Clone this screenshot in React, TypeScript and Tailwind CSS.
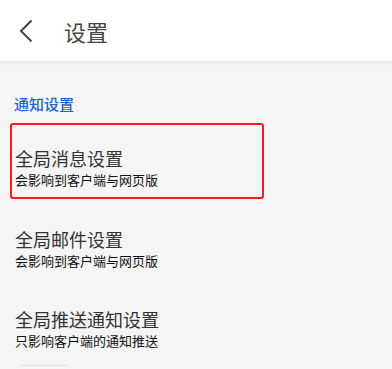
import React from 'react';

const items = [
  { title: '全局消息设置', desc: '会影响到客户端与网页版', highlight: true },
  { title: '全局邮件设置', desc: '会影响到客户端与网页版' },
  { title: '全局推送通知设置', desc: '只影响客户端的通知推送' },
];

export default function App() {
  return (
    <div
      className="w-[392px] h-[369px] overflow-hidden bg-[#f5f5f5]"
      style={{ fontFamily: '"Noto Sans CJK SC", "Noto Sans", sans-serif' }}
    >
      {/* Header */}
      <div className="h-[62px] bg-white flex items-center shadow-[0_1px_3px_rgba(0,0,0,0.08)] border-b border-[#ececec]">
        <svg width="14" height="24" viewBox="0 0 14 24" className="ml-[19px]" fill="none">
          <path d="M12.5 1.5 L2 12 L12.5 22.5" stroke="#444" strokeWidth="2" />
        </svg>
        <span className="ml-[31px] text-[22px] text-[#444] leading-none">设置</span>
      </div>

      <div className="px-[10px]">
        <div className="pl-[4px] pt-[34px] text-[15px] leading-none font-medium text-[#1565d8]">通知设置</div>

        <div className="mt-[12px] flex flex-col">
          {items.map((item, idx) => (
            <div
              key={idx}
              className={
                item.highlight
                  ? 'w-[254px] h-[76px] border-2 border-[#ff1a1a] rounded-[3px] pl-[3px] pt-[24px]'
                  : 'w-[254px] h-[80px] border-2 border-transparent pl-[3px] pt-[29px]'
              }
            >
              <div className="text-[18px] leading-none text-[#333]">{item.title}</div>
              <div className="mt-[6px] text-[13px] leading-none text-[#111]">{item.desc}</div>
            </div>
          ))}
        </div>
        <div className="ml-[10px] mt-[6px] w-[48px] h-px bg-[#e2e2e2]" />
      </div>
    </div>
  );
}
